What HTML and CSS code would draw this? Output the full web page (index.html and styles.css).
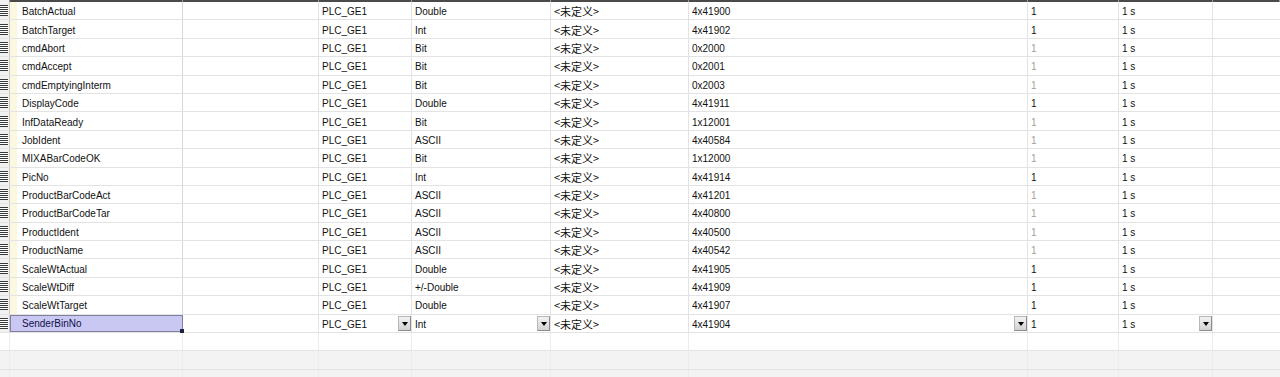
FILE: index.html
```html
<!DOCTYPE html>
<html>
<head>
<meta charset="utf-8">
<link rel="stylesheet" href="styles.css">
</head>
<body>
<div class="grid">
  <div class="row head">
    <div class="c g"></div><div class="c"></div><div class="c"></div><div class="c"></div><div class="c"></div><div class="c"></div><div class="c"></div><div class="c"></div><div class="c"></div><div class="c last"></div>
  </div>

  <div class="row"><div class="c g"><i class="ico"></i></div><div class="c name">BatchActual</div><div class="c"></div><div class="c">PLC_GE1</div><div class="c">Double</div><div class="c cjk">&lt;未定义&gt;</div><div class="c">4x41900</div><div class="c">1</div><div class="c">1 s</div><div class="c last"></div></div>
  <div class="row"><div class="c g"><i class="ico"></i></div><div class="c name">BatchTarget</div><div class="c"></div><div class="c">PLC_GE1</div><div class="c">Int</div><div class="c cjk">&lt;未定义&gt;</div><div class="c">4x41902</div><div class="c">1</div><div class="c">1 s</div><div class="c last"></div></div>
  <div class="row"><div class="c g"><i class="ico"></i></div><div class="c name">cmdAbort</div><div class="c"></div><div class="c">PLC_GE1</div><div class="c">Bit</div><div class="c cjk">&lt;未定义&gt;</div><div class="c">0x2000</div><div class="c dim">1</div><div class="c">1 s</div><div class="c last"></div></div>
  <div class="row"><div class="c g"><i class="ico"></i></div><div class="c name">cmdAccept</div><div class="c"></div><div class="c">PLC_GE1</div><div class="c">Bit</div><div class="c cjk">&lt;未定义&gt;</div><div class="c">0x2001</div><div class="c dim">1</div><div class="c">1 s</div><div class="c last"></div></div>
  <div class="row"><div class="c g"><i class="ico"></i></div><div class="c name">cmdEmptyingInterm</div><div class="c"></div><div class="c">PLC_GE1</div><div class="c">Bit</div><div class="c cjk">&lt;未定义&gt;</div><div class="c">0x2003</div><div class="c dim">1</div><div class="c">1 s</div><div class="c last"></div></div>
  <div class="row"><div class="c g"><i class="ico"></i></div><div class="c name">DisplayCode</div><div class="c"></div><div class="c">PLC_GE1</div><div class="c">Double</div><div class="c cjk">&lt;未定义&gt;</div><div class="c">4x41911</div><div class="c">1</div><div class="c">1 s</div><div class="c last"></div></div>
  <div class="row"><div class="c g"><i class="ico"></i></div><div class="c name">InfDataReady</div><div class="c"></div><div class="c">PLC_GE1</div><div class="c">Bit</div><div class="c cjk">&lt;未定义&gt;</div><div class="c">1x12001</div><div class="c dim">1</div><div class="c">1 s</div><div class="c last"></div></div>
  <div class="row"><div class="c g"><i class="ico"></i></div><div class="c name">JobIdent</div><div class="c"></div><div class="c">PLC_GE1</div><div class="c">ASCII</div><div class="c cjk">&lt;未定义&gt;</div><div class="c">4x40584</div><div class="c dim">1</div><div class="c">1 s</div><div class="c last"></div></div>
  <div class="row"><div class="c g"><i class="ico"></i></div><div class="c name">MIXABarCodeOK</div><div class="c"></div><div class="c">PLC_GE1</div><div class="c">Bit</div><div class="c cjk">&lt;未定义&gt;</div><div class="c">1x12000</div><div class="c dim">1</div><div class="c">1 s</div><div class="c last"></div></div>
  <div class="row"><div class="c g"><i class="ico"></i></div><div class="c name">PicNo</div><div class="c"></div><div class="c">PLC_GE1</div><div class="c">Int</div><div class="c cjk">&lt;未定义&gt;</div><div class="c">4x41914</div><div class="c">1</div><div class="c">1 s</div><div class="c last"></div></div>
  <div class="row"><div class="c g"><i class="ico"></i></div><div class="c name">ProductBarCodeAct</div><div class="c"></div><div class="c">PLC_GE1</div><div class="c">ASCII</div><div class="c cjk">&lt;未定义&gt;</div><div class="c">4x41201</div><div class="c dim">1</div><div class="c">1 s</div><div class="c last"></div></div>
  <div class="row"><div class="c g"><i class="ico"></i></div><div class="c name">ProductBarCodeTar</div><div class="c"></div><div class="c">PLC_GE1</div><div class="c">ASCII</div><div class="c cjk">&lt;未定义&gt;</div><div class="c">4x40800</div><div class="c dim">1</div><div class="c">1 s</div><div class="c last"></div></div>
  <div class="row"><div class="c g"><i class="ico"></i></div><div class="c name">ProductIdent</div><div class="c"></div><div class="c">PLC_GE1</div><div class="c">ASCII</div><div class="c cjk">&lt;未定义&gt;</div><div class="c">4x40500</div><div class="c dim">1</div><div class="c">1 s</div><div class="c last"></div></div>
  <div class="row"><div class="c g"><i class="ico"></i></div><div class="c name">ProductName</div><div class="c"></div><div class="c">PLC_GE1</div><div class="c">ASCII</div><div class="c cjk">&lt;未定义&gt;</div><div class="c">4x40542</div><div class="c dim">1</div><div class="c">1 s</div><div class="c last"></div></div>
  <div class="row"><div class="c g"><i class="ico"></i></div><div class="c name">ScaleWtActual</div><div class="c"></div><div class="c">PLC_GE1</div><div class="c">Double</div><div class="c cjk">&lt;未定义&gt;</div><div class="c">4x41905</div><div class="c">1</div><div class="c">1 s</div><div class="c last"></div></div>
  <div class="row"><div class="c g"><i class="ico"></i></div><div class="c name">ScaleWtDiff</div><div class="c"></div><div class="c">PLC_GE1</div><div class="c">+/-Double</div><div class="c cjk">&lt;未定义&gt;</div><div class="c">4x41909</div><div class="c">1</div><div class="c">1 s</div><div class="c last"></div></div>
  <div class="row"><div class="c g"><i class="ico"></i></div><div class="c name">ScaleWtTarget</div><div class="c"></div><div class="c">PLC_GE1</div><div class="c">Double</div><div class="c cjk">&lt;未定义&gt;</div><div class="c">4x41907</div><div class="c">1</div><div class="c">1 s</div><div class="c last"></div></div>
  <div class="row"><div class="c g"><i class="ico"></i></div><div class="c name sel">SenderBinNo<span class="handle"></span></div><div class="c"></div><div class="c dd"><span class="t">PLC_GE1</span><span class="btn"></span></div><div class="c dd"><span class="t">Int</span><span class="btn"></span></div><div class="c cjk">&lt;未定义&gt;</div><div class="c dd"><span class="t">4x41904</span><span class="btn"></span></div><div class="c">1</div><div class="c dd"><span class="t">1 s</span><span class="btn"></span></div><div class="c last"></div></div>

  <div class="row empty"><div class="c g"></div><div class="c"></div><div class="c"></div><div class="c"></div><div class="c"></div><div class="c"></div><div class="c"></div><div class="c"></div><div class="c"></div><div class="c last"></div></div>
  <div class="row empty grey"><div class="c g"></div><div class="c"></div><div class="c"></div><div class="c"></div><div class="c"></div><div class="c"></div><div class="c"></div><div class="c"></div><div class="c"></div><div class="c last"></div></div>
  <div class="row empty grey"><div class="c g"></div><div class="c"></div><div class="c"></div><div class="c"></div><div class="c"></div><div class="c"></div><div class="c"></div><div class="c"></div><div class="c"></div><div class="c last"></div></div>
</div>
</body>
</html>
```

FILE: styles.css
```css
html, body {
  margin: 0;
  padding: 0;
  background: #ffffff;
  overflow: hidden;
}

.grid {
  width: 1280px;
  font-family: "Liberation Sans", Arial, sans-serif;
  font-size: 10px;
  color: #111;
}

.row {
  display: grid;
  grid-template-columns: 10px 173px 136px 93px 139px 138px 339px 91px 94px 1fr;
  height: 18.4px;
  box-sizing: border-box;
  border-bottom: 1px solid #e3e3e3;
}

.row.head {
  height: 2px;
  border-bottom: none;
  background: #4a4a4a;
}

.row.head .c {
  border-right: 1px solid #9a9a9a;
  padding: 0;
}

.c {
  box-sizing: border-box;
  border-right: 1px solid #e3e3e3;
  padding-left: 3px;
  padding-top: 2px;
  display: flex;
  align-items: center;
  white-space: nowrap;
  overflow: hidden;
  min-width: 0;
}

.c.last {
  border-right: none;
}

.c.g {
  padding: 0;
  background: #f1f1f1;
  border-right: 1px solid #c8c8c8;
  justify-content: flex-start;
}

.ico {
  display: block;
  width: 8px;
  height: 11px;
  background: repeating-linear-gradient(to bottom, #3a3a3a 0, #3a3a3a 1px, #ffffff 1px, #ffffff 2px);
}

.c.name {
  padding-left: 12px;
  background: linear-gradient(to right, #fbf8df 0, #fbf8df 7px, #ffffff 7px);
  border-right: 1px solid #d8d8d8;
  position: relative;
  overflow: visible;
}

.c.name.sel {
  background: #c8c8f2;
  border: 1px solid #80809e;
  padding-left: 11px;
  padding-top: 1px;
  color: #10104a;
}

.handle {
  position: absolute;
  right: -2px;
  bottom: -2px;
  width: 4px;
  height: 4px;
  background: #202040;
}

.c.cjk {
  font-family: "Noto Sans CJK SC", "Liberation Sans", sans-serif;
  font-size: 11px;
  padding-top: 1px;
}

.c.dim {
  color: #a0a0a0;
}

.c.dd {
  padding-right: 0;
  padding-top: 0;
}

.c.dd .t {
  flex: 1;
  padding-top: 2px;
}

.btn {
  width: 13px;
  height: 15px;
  box-sizing: border-box;
  border: 1px solid #b8b8b8;
  border-right-color: #8c8c8c;
  border-bottom-color: #8c8c8c;
  background: linear-gradient(to bottom, #f2f2f2, #d2d2d2);
  display: flex;
  align-items: center;
  justify-content: center;
  margin-top: 1px;
}

.btn::after {
  content: "";
  width: 0;
  height: 0;
  border-left: 3px solid transparent;
  border-right: 3px solid transparent;
  border-top: 4px solid #000;
}

.row.empty .c.g {
  background: #ffffff;
}

.row.empty .c {
  border-right-color: #ececec;
}

.row.grey {
  background: #f3f3f3;
  border-bottom-color: #e2e2e2;
  height: 19px;
}

.row.grey .c.g {
  background: #f3f3f3;
}
```
